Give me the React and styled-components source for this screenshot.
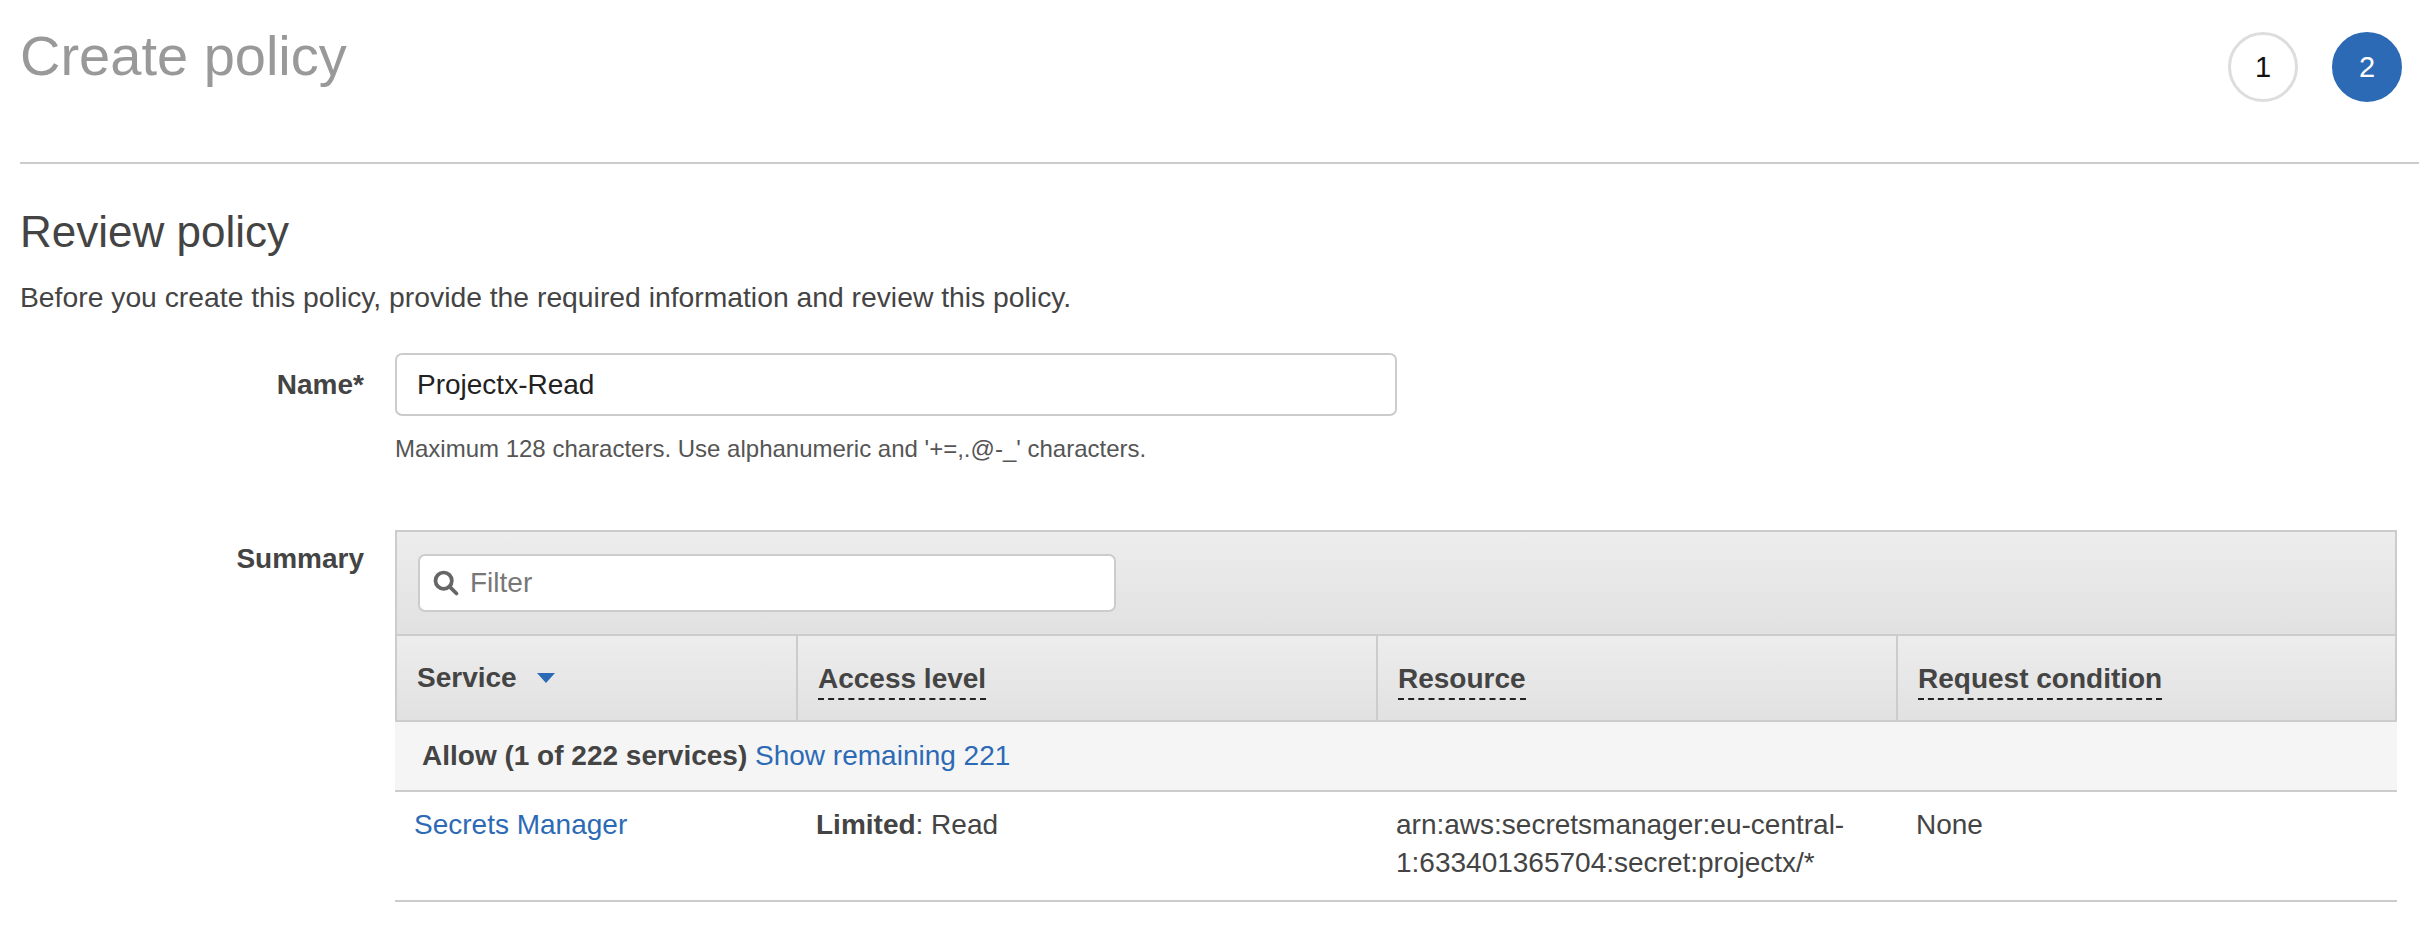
import React from 'react';
import styled, { createGlobalStyle } from 'styled-components';

const GlobalStyle = createGlobalStyle`
    body {
        margin: 0;
        background: #fff;
        font-family: "Liberation Sans", Arial, sans-serif;
        color: #444;
    }
`

const Page = styled.div`
    padding: 0 9px 0 20px;
`

const Header = styled.div`
    display: flex;
    justify-content: space-between;
    align-items: flex-start;
    height: 164px;
    border-bottom: 2px solid #ccc;
    box-sizing: border-box;
`

const Title = styled.h1`
    margin: 28px 0 0;
    font-size: 56px;
    line-height: 1;
    font-weight: 400;
    color: #999;
`

const Steps = styled.div`
    display: flex;
    gap: 34px;
    margin: 32px 17px 0 0;
`

const Step = styled.div`
    width: 70px;
    height: 70px;
    border-radius: 50%;
    box-sizing: border-box;
    display: flex;
    align-items: center;
    justify-content: center;
    font-size: 29px;
    border: 3px solid ${p => p.active ? '#2d6ab5' : '#ddd'};
    background: ${p => p.active ? '#2d6ab5' : '#fff'};
    color: ${p => p.active ? '#fff' : '#111'};
`

const Content = styled.div`
    padding-right: 22px;
`

const SubTitle = styled.h2`
    margin: 41px 0 0;
    font-size: 44px;
    line-height: 53px;
    font-weight: 400;
    color: #444;
`

const Intro = styled.p`
    margin: 19px 0 0;
    font-size: 28.3px;
    line-height: 40px;
    color: #444;
`

const FormRow = styled.div`
    display: grid;
    grid-template-columns: 344px 1fr;
    column-gap: 31px;
    align-items: ${p => p.top ? 'start' : 'center'};
    margin-top: ${p => p.gap}px;
`

const Label = styled.div`
    text-align: right;
    font-size: 28px;
    font-weight: 700;
    color: #444;
    padding-top: ${p => p.top ? '13px' : '0'};
`

const TextInput = styled.div`
    width: 1002px;
    height: 63px;
    box-sizing: border-box;
    border: 2px solid #ccc;
    border-radius: 7px;
    padding: 0 20px;
    display: flex;
    align-items: center;
    font-size: 28px;
    color: #222;
`

const Hint = styled.div`
    margin: 17px 0 0 375px;
    font-size: 24px;
    line-height: 32px;
    color: #555;
`

const TableHead = styled.div`
    border: 2px solid #ccc;
    border-bottom: none;
`

const FilterBar = styled.div`
    padding: 22px 21px;
    background: linear-gradient(#ededed, #e1e1e1);
    border-bottom: 2px solid #ccc;
`

const FilterBox = styled.div`
    width: 698px;
    height: 58px;
    box-sizing: border-box;
    background: #fff;
    border: 2px solid #ccc;
    border-radius: 7px;
    display: flex;
    align-items: center;
    gap: 10px;
    padding-left: 12px;
    font-size: 28px;
    color: #777;
`

const Grid = styled.div`
    display: grid;
    grid-template-columns: 399px 580px 520px 1fr;
`

const HeadRow = styled(Grid)`
    background: linear-gradient(#ededed, #e1e1e1);
    border-bottom: 2px solid #ccc;
    height: 84px;
`

const HeadCell = styled.div`
    display: flex;
    align-items: center;
    gap: 20px;
    padding: 0 20px;
    border-left: ${p => p.first ? 'none' : '2px solid #ccc'};
    font-size: 28px;
    font-weight: 700;
    color: #444;
`

const Hinted = styled.span`
    border-bottom: 2px dashed #222;
    padding-bottom: 3px;
    margin-top: 7px;
`

const SortArrow = styled.span`
    width: 0;
    height: 0;
    border-left: 9px solid transparent;
    border-right: 9px solid transparent;
    border-top: 10px solid #2d6ab5;
`

const GroupRow = styled.div`
    background: #f5f5f5;
    border-bottom: 2px solid #ccc;
    height: 68px;
    display: flex;
    align-items: center;
    padding-left: 27px;
    font-size: 28px;
    color: #444;
`

const Strong = styled.b`
    font-weight: 700;
    color: #444;
`

const Link = styled.a`
    color: #2d6ab5;
    text-decoration: none;
    cursor: pointer;
`

const DataRow = styled(Grid)`
    border-bottom: 2px solid #ccc;
    height: 110px;
    box-sizing: border-box;
`

const Cell = styled.div`
    padding: 14px 20px 0 ${p => p.first ? '19px' : '22px'};
    font-size: 28px;
    line-height: 38px;
    color: #444;
`

const SearchIcon = () => (
    <svg width="28" height="28" viewBox="0 0 24 24" fill="none" stroke="#666" strokeWidth="3.2" strokeLinecap="round">
        <circle cx="10" cy="10" r="7" />
        <line x1="15.5" y1="15.5" x2="21" y2="21" />
    </svg>
)

export default function App() {
    return (
        <Page>
            <GlobalStyle />
            <Header>
                <Title>Create policy</Title>
                <Steps>
                    <Step>1</Step>
                    <Step active>2</Step>
                </Steps>
            </Header>
            <Content>
                <SubTitle>Review policy</SubTitle>
                <Intro>Before you create this policy, provide the required information and review this policy.</Intro>
                <FormRow gap={36}>
                    <Label>Name*</Label>
                    <TextInput>Projectx-Read</TextInput>
                </FormRow>
                <Hint>Maximum 128 characters. Use alphanumeric and '+=,.@-_' characters.</Hint>
                <FormRow gap={65} top>
                    <Label top>Summary</Label>
                    <div>
                        <TableHead>
                            <FilterBar>
                                <FilterBox>
                                    <SearchIcon />
                                    Filter
                                </FilterBox>
                            </FilterBar>
                            <HeadRow>
                                <HeadCell first>Service <SortArrow /></HeadCell>
                                <HeadCell><Hinted>Access level</Hinted></HeadCell>
                                <HeadCell><Hinted>Resource</Hinted></HeadCell>
                                <HeadCell><Hinted>Request condition</Hinted></HeadCell>
                            </HeadRow>
                        </TableHead>
                        <GroupRow>
                            <Strong>Allow (1 of 222 services)</Strong>&nbsp;<Link>Show remaining 221</Link>
                        </GroupRow>
                        <DataRow>
                            <Cell first><Link>Secrets Manager</Link></Cell>
                            <Cell><Strong>Limited</Strong>: Read</Cell>
                            <Cell>arn:aws:secretsmanager:eu-central-1:633401365704:secret:projectx/*</Cell>
                            <Cell>None</Cell>
                        </DataRow>
                    </div>
                </FormRow>
            </Content>
        </Page>
    );
}
